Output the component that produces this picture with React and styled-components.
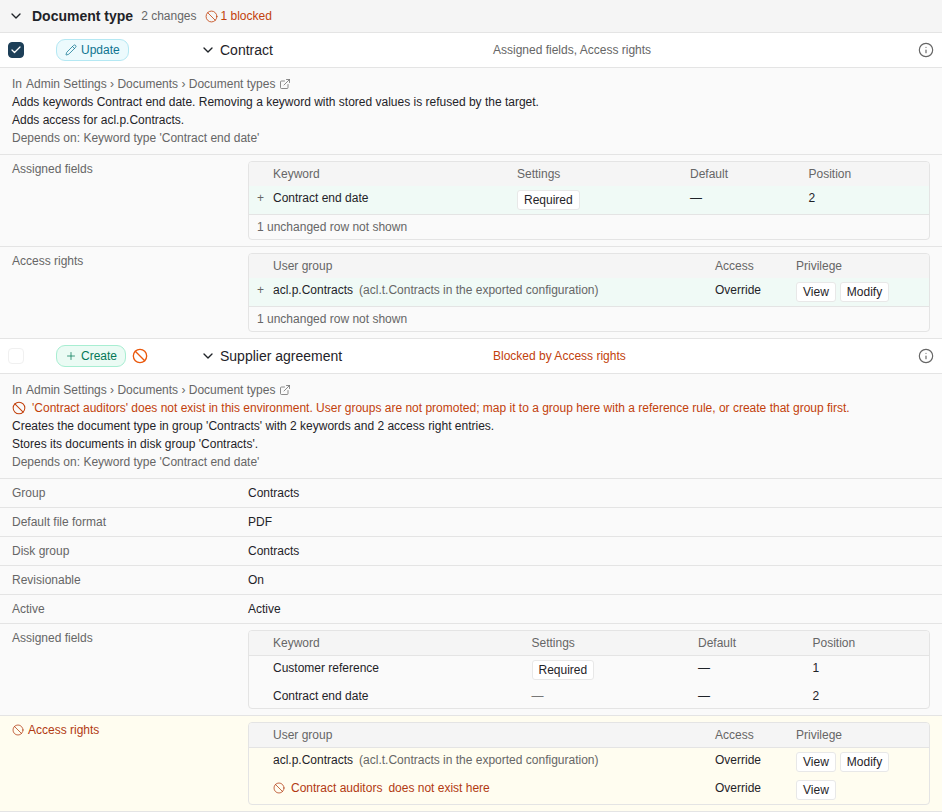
import React from 'react';
import styled, { createGlobalStyle } from 'styled-components';
import { ChevronDown, Ban, Pencil, Plus, Check, Info, ExternalLink } from 'lucide-react';

const Global = createGlobalStyle`
  html, body { margin: 0; padding: 0; background: #fff; }
  body { font-family: "Liberation Sans", Arial, sans-serif; font-size: 12px; line-height: 18px; color: #1f2328; }
`;

const Page = styled.div`
  width: 942px;
  height: 812px;
  overflow: hidden;
`;
const GroupHeader = styled.div`
  display: flex;
  align-items: center;
  height: 32px;
  padding: 0 8px;
  background: #f5f5f5;
  border-bottom: 1px solid #e4e4e4;
`;
const GroupToggle = styled.span`
  display: flex;
  width: 24px;
  color: #1f2328;
`;
const GroupTitle = styled.span`
  font-size: 14px;
  font-weight: 700;
  margin-right: 8px;
`;
const Muted = styled.span`
  color: #666;
`;
const BlockedCount = styled.span`
  display: inline-flex;
  align-items: center;
  gap: 3px;
  margin-left: 8px;
  color: #c2410c;
`;
const ChangeRow = styled.div`
  display: flex;
  align-items: center;
  height: 34px;
  background: #fff;
  border-bottom: 1px solid #e4e4e4;
  padding: 0 8px;
`;
const CheckBox = styled.span`
  display: flex;
  align-items: center;
  justify-content: center;
  width: 16px;
  height: 16px;
  box-sizing: border-box;
  border-radius: 4px;
  color: #fff;
  background: ${p => (p.$checked ? '#1d3f58' : '#fff')};
  border: 1px solid ${p => (p.$checked ? '#1d3f58' : '#f0f0f0')};
  margin-right: 32px;
`;
const BadgeCell = styled.div`
  display: flex;
  align-items: center;
  gap: 6px;
  width: 144px;
`;
const Pill = styled.span`
  display: inline-flex;
  align-items: center;
  gap: 4px;
  height: 22px;
  box-sizing: border-box;
  padding: 0 8px;
  border-radius: 9px;
  border: 1px solid ${p => (p.$kind === 'create' ? '#a8eed2' : '#b4e8f3')};
  background: ${p => (p.$kind === 'create' ? '#ebfbf4' : '#ecfafd')};
  color: ${p => (p.$kind === 'create' ? '#047857' : '#0e7490')};
`;
const NameCell = styled.div`
  display: flex;
  align-items: center;
  gap: 4px;
  width: 293px;
  font-size: 14px;
`;
const Summary = styled.div`
  flex: 1;
  color: ${p => (p.$blocked ? '#c2410c' : '#666')};
`;
const InfoButton = styled.span`
  display: flex;
  color: #666;
`;
const Details = styled.div`
  padding: 7px 12px;
  background: #fafafa;
  border-bottom: 1px solid #e4e4e4;
`;
const Line = styled.div`
  display: flex;
  align-items: center;
  color: ${p => (p.$tone === 'muted' ? '#666' : p.$tone === 'error' ? '#c2410c' : '#1f2328')};
`;
const Crumb = styled.span`
  margin-left: 4px;
  display: inline-flex;
  align-items: center;
  gap: 4px;
`;
const ErrorIcon = styled.span`
  display: flex;
  margin-right: 6px;
`;
const FieldRow = styled.div`
  display: grid;
  grid-template-columns: 236px 1fr;
  padding: 5px 12px;
  background: ${p => (p.$warn ? '#fffdf0' : '#fafafa')};
  border-bottom: 1px solid #e4e4e4;
`;
const FieldLabel = styled.div`
  display: flex;
  align-items: center;
  align-self: start;
  gap: 4px;
  color: ${p => (p.$warn ? '#b23a12' : '#666')};
`;
const TableFrame = styled.div`
  margin: 1px 0;
  border: 1px solid #e4e4e4;
  border-radius: 4px;
  overflow: hidden;
`;
const Grid = styled.table`
  width: 100%;
  border-collapse: collapse;
  table-layout: fixed;
`;
const Th = styled.th`
  height: 24px;
  padding: 0 8px 0 ${p => (p.$gutter ? '8px' : '0')};
  background: #f5f5f5;
  font-weight: 400;
  text-align: left;
  color: #666;
  border-bottom: ${p => (p.$flush ? 'none' : '1px solid #e4e4e4')};
`;
const Tr = styled.tr`
  background: ${p => (p.$added ? '#f0faf6' : 'transparent')};
`;
const Td = styled.td`
  padding: 3px 8px 3px 0;
  vertical-align: top;
  color: ${p => (p.$dim ? '#777' : 'inherit')};
  &:first-child { padding-left: 8px; padding-right: 0; color: #666; }
`;
const GroupName = styled.span`
  margin-right: 6px;
`;
const Mapped = styled.span`
  color: #666;
`;
const MissingGroup = styled.span`
  display: inline-flex;
  align-items: center;
  gap: 6px;
  color: #b23a12;
`;
const Chips = styled.div`
  display: flex;
  gap: 4px;
  margin: 1px 0;
`;
const Chip = styled.span`
  display: block;
  height: 20px;
  box-sizing: border-box;
  line-height: 18px;
  padding: 0 6px;
  background: #fff;
  border: 1px solid #e8e8e8;
  border-radius: 3px;
  color: #1f2328;
`;
const FootNote = styled.div`
  height: 24px;
  line-height: 24px;
  padding: 0 8px;
  color: #666;
  border-top: 1px solid #e4e4e4;
`;

const widths1 = [24, 244, 173, 118.5];
const widths2 = [24, 258.5, 166.5, 114.5];
const widthsAcc = [24, 442, 81];

function Cols({ w }) {
  return (
    <colgroup>
      {w.map((x, i) => <col key={i} width={x} />)}
      <col />
    </colgroup>
  );
}

function Head({ names, flush }) {
  return (
    <thead>
      <tr>
        <Th $gutter $flush={flush} />
        {names.map(n => <Th key={n} $flush={flush}>{n}</Th>)}
      </tr>
    </thead>
  );
}

const KW = ['Keyword', 'Settings', 'Default', 'Position'];
const AR = ['User group', 'Access', 'Privilege'];

function Crumbs() {
  return (
    <Line $tone="muted">
      In
      <Crumb>Admin Settings › Documents › Document types <ExternalLink size={12} strokeWidth={1.5} /></Crumb>
    </Line>
  );
}

function Field({ label, value }) {
  return (
    <FieldRow>
      <FieldLabel>{label}</FieldLabel>
      <div>{value}</div>
    </FieldRow>
  );
}

function ContractGroup() {
  return <><GroupName>acl.p.Contracts</GroupName><Mapped>(acl.t.Contracts in the exported configuration)</Mapped></>;
}

export default function App() {
  return (
    <Page>
      <Global />
      <GroupHeader>
        <GroupToggle><ChevronDown size={16} strokeWidth={2} /></GroupToggle>
        <GroupTitle>Document type</GroupTitle>
        <Muted>2 changes</Muted>
        <BlockedCount><Ban size={13} strokeWidth={1.5} />1 blocked</BlockedCount>
      </GroupHeader>

      <ChangeRow>
        <CheckBox $checked><Check size={12} strokeWidth={2.5} /></CheckBox>
        <BadgeCell><Pill><Pencil size={12} strokeWidth={1.5} />Update</Pill></BadgeCell>
        <NameCell><ChevronDown size={16} strokeWidth={2} />Contract</NameCell>
        <Summary>Assigned fields, Access rights</Summary>
        <InfoButton><Info size={16} strokeWidth={1.75} /></InfoButton>
      </ChangeRow>
      <Details>
        <Crumbs />
        <Line>Adds keywords Contract end date. Removing a keyword with stored values is refused by the target.</Line>
        <Line>Adds access for acl.p.Contracts.</Line>
        <Line $tone="muted">Depends on: Keyword type 'Contract end date'</Line>
      </Details>
      <FieldRow>
        <FieldLabel>Assigned fields</FieldLabel>
        <TableFrame>
          <Grid>
            <Cols w={widths1} />
            <Head names={KW} flush />
            <tbody>
              <Tr $added>
                <Td>+</Td><Td>Contract end date</Td><Td><Chips><Chip>Required</Chip></Chips></Td><Td>—</Td><Td>2</Td>
              </Tr>
            </tbody>
          </Grid>
          <FootNote>1 unchanged row not shown</FootNote>
        </TableFrame>
      </FieldRow>
      <FieldRow>
        <FieldLabel>Access rights</FieldLabel>
        <TableFrame>
          <Grid>
            <Cols w={widthsAcc} />
            <Head names={AR} flush />
            <tbody>
              <Tr $added>
                <Td>+</Td><Td><ContractGroup /></Td><Td>Override</Td>
                <Td><Chips><Chip>View</Chip><Chip>Modify</Chip></Chips></Td>
              </Tr>
            </tbody>
          </Grid>
          <FootNote>1 unchanged row not shown</FootNote>
        </TableFrame>
      </FieldRow>

      <ChangeRow>
        <CheckBox />
        <BadgeCell>
          <Pill $kind="create"><Plus size={12} strokeWidth={1.5} />Create</Pill>
          <Ban size={16} color="#ea580c" strokeWidth={2} />
        </BadgeCell>
        <NameCell><ChevronDown size={16} strokeWidth={2} />Supplier agreement</NameCell>
        <Summary $blocked>Blocked by Access rights</Summary>
        <InfoButton><Info size={16} strokeWidth={1.75} /></InfoButton>
      </ChangeRow>
      <Details>
        <Crumbs />
        <Line $tone="error">
          <ErrorIcon><Ban size={14} strokeWidth={1.75} /></ErrorIcon>
          'Contract auditors' does not exist in this environment. User groups are not promoted; map it to a group here with a reference rule, or create that group first.
        </Line>
        <Line>Creates the document type in group 'Contracts' with 2 keywords and 2 access right entries.</Line>
        <Line>Stores its documents in disk group 'Contracts'.</Line>
        <Line $tone="muted">Depends on: Keyword type 'Contract end date'</Line>
      </Details>
      <Field label="Group" value="Contracts" />
      <Field label="Default file format" value="PDF" />
      <Field label="Disk group" value="Contracts" />
      <Field label="Revisionable" value="On" />
      <Field label="Active" value="Active" />
      <FieldRow>
        <FieldLabel>Assigned fields</FieldLabel>
        <TableFrame>
          <Grid>
            <Cols w={widths2} />
            <Head names={KW} />
            <tbody>
              <Tr>
                <Td /><Td>Customer reference</Td><Td><Chips><Chip>Required</Chip></Chips></Td><Td>—</Td><Td>1</Td>
              </Tr>
              <Tr>
                <Td /><Td>Contract end date</Td><Td $dim>—</Td><Td>—</Td><Td>2</Td>
              </Tr>
            </tbody>
          </Grid>
        </TableFrame>
      </FieldRow>
      <FieldRow $warn>
        <FieldLabel $warn><Ban size={12} strokeWidth={1.5} />Access rights</FieldLabel>
        <TableFrame>
          <Grid>
            <Cols w={widthsAcc} />
            <Head names={AR} />
            <tbody>
              <Tr>
                <Td /><Td><ContractGroup /></Td><Td>Override</Td>
                <Td><Chips><Chip>View</Chip><Chip>Modify</Chip></Chips></Td>
              </Tr>
              <Tr>
                <Td /><Td><MissingGroup><Ban size={12} strokeWidth={1.5} /><span>Contract auditors</span><span>does not exist here</span></MissingGroup></Td><Td>Override</Td>
                <Td><Chips><Chip>View</Chip></Chips></Td>
              </Tr>
            </tbody>
          </Grid>
        </TableFrame>
      </FieldRow>
    </Page>
  );
}
